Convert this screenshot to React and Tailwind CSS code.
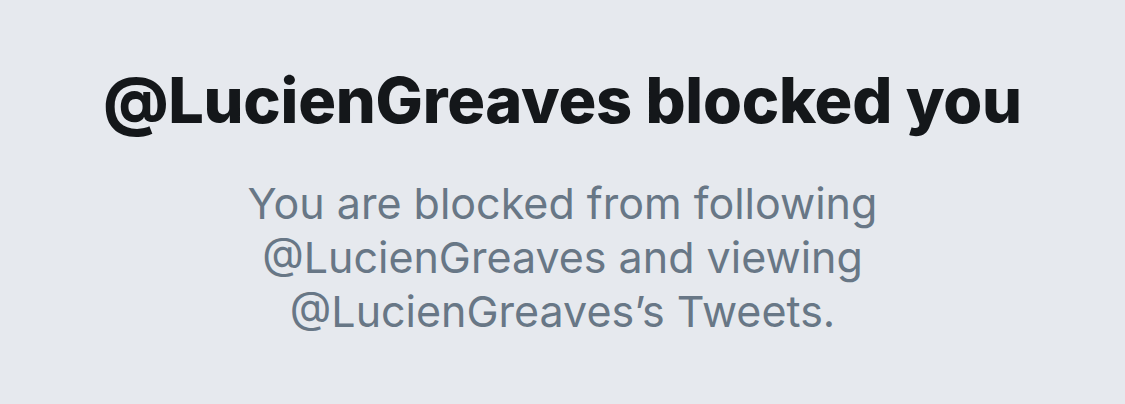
export default function App() {
  return (
    <div className="w-[1125px] h-[404px] bg-[#e6e9ee] flex flex-col items-center pt-[60px] font-['Inter',sans-serif]">
      <h1 className="text-[63px] leading-[80px] font-extrabold text-[#14171a] tracking-[-0.25px]">
        @LucienGreaves blocked you
      </h1>
      <p className="mt-[36px] w-[660px] text-center text-[43px] leading-[54px] text-[#687786]">
        You are blocked from following @LucienGreaves and viewing @LucienGreaves’s Tweets.
      </p>
    </div>
  );
}
